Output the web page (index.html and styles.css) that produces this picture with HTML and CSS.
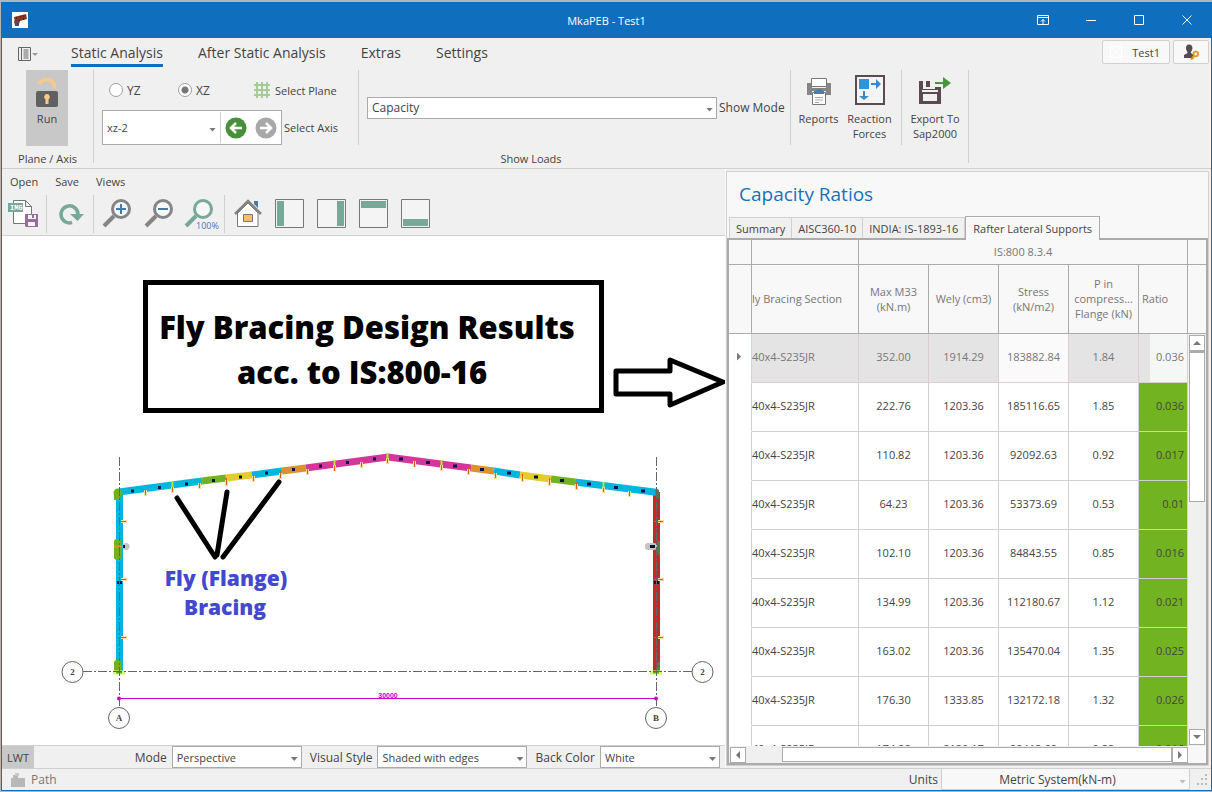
FILE: index.html
```html
<!DOCTYPE html>
<html lang="en">
<head>
<meta charset="utf-8">
<title>MkaPEB - Test1</title>
<link rel="stylesheet" href="styles.css">
</head>
<body>
<div class="window">
  <header class="titlebar">
    <svg class="app-logo" width="16" height="16" viewBox="0 0 16 16" aria-hidden="true"><rect width="16" height="16" fill="#fff"/><path d="M2 5L14 2l1 5-7 2-1 3H3z" fill="#8a3524"/><path d="M2 9l5 1v4H3z" fill="#4d5268"/><path d="M4 6h1M8 5h1M11 4h1M11 7h1M5 12h1M7 8h1" stroke="#2c1511" stroke-width="1"/></svg>
    <h1 class="window-title">MkaPEB - Test1</h1>
    <div class="window-buttons">
      <button type="button" aria-label="Ribbon display options"><svg width="16" height="16" viewBox="0 0 16 16"><path d="M2.500 3.500h11v9h-11zM2.500 5.500h11M8 12V7.500M6 9.500l2-2 2 2" class="ws"/></svg></button>
      <button type="button" aria-label="Minimize"><svg width="16" height="16" viewBox="0 0 16 16"><path d="M3 8.500h10" class="ws"/></svg></button>
      <button type="button" aria-label="Maximize"><svg width="16" height="16" viewBox="0 0 16 16"><path d="M3.500 3.500h9v9h-9z" class="ws"/></svg></button>
      <button type="button" aria-label="Close"><svg width="16" height="16" viewBox="0 0 16 16"><path d="M3.500 3.500l9 9M12.500 3.500l-9 9" class="ws"/></svg></button>
    </div>
  </header>

  <section class="ribbon">
    <div class="ribbon-head">
      <button type="button" class="app-menu" aria-label="Application menu"><svg width="20" height="14" viewBox="0 0 20 14"><path d="M.5.5h12v13H.5zM3.500 0v14M5.500 3h5M5.500 5h5M5.500 7h5M5.500 9h5M5.500 11h5" fill="none" stroke="#666"/><path d="M14 6h6l-3 3z" fill="#999"/></svg></button>
      <nav class="ribbon-tabs">
        <button type="button" class="ribbon-tab is-active">Static Analysis</button>
        <button type="button" class="ribbon-tab">After Static Analysis</button>
        <button type="button" class="ribbon-tab">Extras</button>
        <button type="button" class="ribbon-tab">Settings</button>
      </nav>
      <div class="account">
        <button type="button" class="account-button"><svg width="12" height="12" viewBox="0 0 12 12"><path d="M.5.5h11v11H.5zM2 2l8 8M10 2l-8 8" fill="none" stroke="#fff"/></svg>Test1</button>
        <button type="button" class="account-button key" aria-label="User licence"><svg width="16" height="16" viewBox="0 0 16 16"><path d="M3 4a3.200 3.500 0 0 1 6.400 0c0 2-1 3.500-1.500 4v1L11 11v3H1v-3l3.500-2V8C4 7.500 3 6 3 4z" fill="#554b50"/><circle cx="12.800" cy="10" r="2.300" fill="none" stroke="#e09a2d" stroke-width="1.800"/><path d="M11.500 11.500L8 15.500M9.500 14l1 1" stroke="#e09a2d" stroke-width="2"/></svg></button>
      </div>
    </div>
    <div class="ribbon-body">
      <div class="group run-group">
        <div class="group-content">
          <button type="button" class="run-button">
            <svg width="24" height="34" viewBox="0 0 24 34"><path d="M4 10a8 7 0 1 1 15 5" fill="none" stroke="#f8c98c" stroke-width="3.500"/><rect x="1" y="17" width="22" height="16" rx="2" fill="#606060"/><path d="M12 20a3 3 0 0 1 1.500 5.500V30h-3v-4.500A3 3 0 0 1 12 20z" fill="#f8c98c"/></svg>
            Run</button>
        </div>
        <div class="group-caption">Plane / Axis</div>
      </div>
      <div class="group loads-group">
        <div class="group-content">
          <div class="plane-block">
            <div class="plane-row">
              <label class="radio yz"><input type="radio" name="plane">YZ</label>
              <label class="radio xz"><input type="radio" name="plane" checked>XZ</label>
              <span class="plane-title"><svg width="16" height="16" viewBox="0 0 16 16"><path d="M3 0v16M8 0v16M13 0v16M0 3h16M0 8h16M0 13h16" stroke="#a5cb96" stroke-width="2"/></svg>Select Plane</span>
            </div>
            <div class="axis-row">
              <div class="axis-box">
                <span class="combo axis"><select id="axis" aria-label="Axis"><option>xz-2</option></select></span>
                <button type="button" class="round" aria-label="Previous axis"><svg width="22" height="22" viewBox="0 0 22 22"><circle cx="11" cy="11" r="10.500" fill="#478f3b"/><path d="M17 11H7M11 6l-5 5 5 5" fill="none" stroke="#fff" stroke-width="2.500"/></svg></button>
                <button type="button" class="round" aria-label="Next axis"><svg width="22" height="22" viewBox="0 0 22 22"><circle cx="11" cy="11" r="10.500" fill="#a8a8a8"/><path d="M5 11h10M11 6l5 5-5 5" fill="none" stroke="#fff" stroke-width="2.500"/></svg></button>
              </div>
              <label for="axis">Select Axis</label>
            </div>
          </div>
          <div class="mode-block">
            <span class="combo mode"><select id="showmode"><option>Capacity</option></select></span>
            <label for="showmode">Show Mode</label>
          </div>
          <div class="tool-block">
            <button type="button" class="big-button"><svg width="32" height="32" viewBox="0 0 32 32"><path d="M4 9h5v5h14V9h5v12h-5v-4H9v4H4z" fill="#858585"/><path d="M8.500 4.500h15v8h-15zM9.500 18.500h13v12h-13z" fill="#fff" stroke="#777"/><path d="M11 17h2l1-2h4l1 2h2v3H11z" fill="#4580b0"/><path d="M12 23.500h8M12 26h8M12 28.500h4" stroke="#aaa"/></svg><span>Reports</span></button>
            <button type="button" class="big-button"><svg width="32" height="32" viewBox="0 0 32 32"><rect x="2" y="2" width="28" height="28" fill="#f4f4f4" stroke="#5a4b51" stroke-width="2"/><path d="M5 5h10v10H5z" fill="#2f94d8"/><path d="M17 9h5V5l5 5-5 5v-4h-5zM9 17v5H5l5 4 5-4h-4v-5z" fill="#3b89cc"/></svg><span>Reaction<br>Forces</span></button>
          </div>
          <div class="tool-block last">
            <button type="button" class="big-button"><svg width="32" height="32" viewBox="0 0 32 32"><path d="M0 7h4v8h12v-2h6v17H0zM4 20v7h14v-7zM3 16v2h16v-2zM7 7h4v6H7z" fill="#5a4b51" fill-rule="evenodd"/><path d="M16 8h8V3l8 6-8 6v-5h-8z" fill="#4a9440"/></svg><span>Export To<br>Sap2000</span></button>
          </div>
        </div>
        <div class="group-caption">Show Loads</div>
      </div>
    </div>
  </section>

  <main class="workspace">
    <section class="model">
      <nav class="menu"><button type="button">Open</button><button type="button">Save</button><button type="button">Views</button></nav>
      <div class="toolbar">
        <button type="button" aria-label="Save image"><svg width="32" height="32" viewBox="0 0 32 32"><path d="M6.500 2.500h12l6 6v17h-18zM18.500 2.500v6h6" fill="#fff" stroke="#777"/><rect x="1" y="5" width="15" height="9" fill="#78a898"/><text x="3" y="12" class="img-text">IMG</text><path d="M18 16h13v13H19l-1-1z" fill="#966e9a"/><path d="M21 17h8v4h-8zM21 24h7v4h-7z" fill="#f4f4f4"/><path d="M25 17h2v3h-2z" fill="#966e9a"/></svg></button>
        <i class="sep"></i>
        <button type="button" aria-label="Refresh"><svg width="32" height="32" viewBox="0 0 32 32"><path d="M18 24.500A8.500 8.500 0 1 1 24 16" fill="none" stroke="#78a898" stroke-width="3.500"/><path d="M16 16h14l-6.500 7z" fill="#78a898"/></svg></button>
        <i class="sep"></i>
        <button type="button" aria-label="Zoom in"><svg width="32" height="32" viewBox="0 0 32 32"><path d="M13 18L3 28" stroke="#858585" stroke-width="4"/><circle cx="20" cy="11" r="8.500" class="lens"/><path d="M20 6v10M15 11h10" stroke="#3f7cad" stroke-width="2"/></svg></button>
        <button type="button" aria-label="Zoom out"><svg width="32" height="32" viewBox="0 0 32 32"><path d="M13 18L3 28" stroke="#858585" stroke-width="4"/><circle cx="20" cy="11" r="8.500" class="lens"/><path d="M15 11h10" stroke="#3f7cad" stroke-width="2"/></svg></button>
        <button type="button" aria-label="Zoom 100%"><svg width="32" height="32" viewBox="0 0 32 32"><path d="M11 18L1 28" stroke="#78a898" stroke-width="4"/><circle cx="18" cy="11" r="8.500" class="lens green"/><text x="11" y="31" class="percent">100%</text></svg></button>
        <i class="sep"></i>
        <button type="button" aria-label="Home view"><svg width="32" height="32" viewBox="0 0 32 32"><path d="M22 3h4v7l-4-4z" fill="#3f7cad"/><path d="M6 15L16 5l10 10v13.500H5.500V15z" fill="#fff" stroke="#777"/><path d="M3 16L16 3l13 13" fill="none" stroke="#858585" stroke-width="2.500"/><path d="M11.500 16.500h9v7h-9z" fill="#f5c06c" stroke="#777"/></svg></button>
        <button type="button" aria-label="Left view"><svg width="32" height="32" viewBox="0 0 32 32"><path d="M1.500 1.500h28v28h-28z" class="frame"/><path d="M3 3h7v25H3z" fill="#78a898"/></svg></button>
        <button type="button" aria-label="Right view"><svg width="32" height="32" viewBox="0 0 32 32"><path d="M1.500 1.500h28v28h-28z" class="frame"/><path d="M21 3h7v25h-7z" fill="#78a898"/></svg></button>
        <button type="button" aria-label="Top view"><svg width="32" height="32" viewBox="0 0 32 32"><path d="M1.500 1.500h28v28h-28z" class="frame"/><path d="M3 3h25v7H3z" fill="#78a898"/></svg></button>
        <button type="button" aria-label="Bottom view"><svg width="32" height="32" viewBox="0 0 32 32"><path d="M1.500 1.500h28v28h-28z" class="frame"/><path d="M3 21h25v7H3z" fill="#78a898"/></svg></button>
      </div>
      <div class="canvas">
        <svg class="drawing" viewBox="2 236 723 509" role="img" aria-label="Portal frame elevation on axis 2">
          <rect x="145.500" y="282.500" width="456" height="128" fill="none" stroke="#000" stroke-width="5"/>
          <text x="367" y="339" class="note">Fly Bracing Design Results</text>
          <text x="362" y="384" class="note">acc. to IS:800-16</text>
          <path d="M616 371H670V360L723 382 670 405V394H616z" fill="none" stroke="#000" stroke-width="5" stroke-linejoin="round"/>

          <g fill="none" stroke-width="7">
            <path d="M119.500 492V672" stroke="#00b6de"/>
            <path d="M656.500 492V673" stroke="#bf2a2a"/>
            <path d="M119 492L202 481" stroke="#00b6de"/><path d="M202 481L226 478" stroke="#70b221"/><path d="M226 478L252 475" stroke="#e3cc2b"/><path d="M252 475L282 471" stroke="#00b6de"/><path d="M282 471L306 468" stroke="#dd9129"/><path d="M306 468L388 457 471 468" stroke="#d3379b"/>
            <path d="M471 468L494 471" stroke="#dd9129"/><path d="M494 471L520 475" stroke="#00b6de"/><path d="M520 475L551 479" stroke="#e3cc2b"/><path d="M551 479L575 482" stroke="#70b221"/><path d="M575 482L658 492.500" stroke="#00b6de"/>
          </g>
          <g fill="none">
            <path class="glow" d="M145.500 490v6M172.500 487v6M199.500 483v6M226.500 480v6M253.500 476v6M280.500 473v6M307.500 469v6M334.500 465v6M361.500 462v6M387.500 458v6M414.500 461v6M441.500 465v6M468.500 469v6M495.500 473v6M522.500 476v6M549.500 480v6M576.500 484v6M603.500 487v6M629.500 491v6M121 521.500h6M121 579.500h6M121 637.500h6M658 521.500h6M658 579.500h6M658 637.500h6"/>
            <path class="tie" d="M145.500 489v6M172.500 485v7M199.500 481v7M226.500 478v7M253.500 474v7M280.500 471v7M307.500 467v7M334.500 464v7M361.500 460v7M387.500 456v7M414.500 460v7M441.500 463v7M468.500 467v7M495.500 471v7M522.500 474v7M549.500 478v7M576.500 482v7M603.500 486v6M629.500 490v6M117 521.500h9M117 579.500h9M117 637.500h9M654 521.500h9M654 579.500h9M654 637.500h9"/>
            <path d="M172.500 481v6M334.500 460v6M387.500 453v6M441.500 460v5M603.500 482v6" stroke="#b8e82c" stroke-width="2"/>
            <path d="M131 491h3M158 487.500h3M185 484h3M212 480.500h3M239 477h3M265 473h3M292 469.500h3M319 466h3M346 462.500h3M373 459h3M399 459h4M426 462.500h4M453 466h4M480 469.500h4M507 473h4M534 477h4M560 480.500h4M587 484h4M614 487.500h4M641 491h4M117 582.500h5M654 582.500h5" stroke="#00104a" stroke-width="3"/>
          </g>
          <g fill="#70b221"><circle cx="118" cy="493" r="4.500"/><path d="M114 493h6l-1 7h-5z"/><rect x="114" y="539" width="7" height="21" rx="3"/><rect x="114" y="660" width="7" height="13" rx="3"/></g>
          <g fill="#5b7b45"><path d="M655 490h4v9l-3-2zM657 541h3v18l-3-8zM657 662h3v10h-3z"/></g>
          <path d="M113 672.500h12M650 672.500h12" stroke="#d8ff70" stroke-width="4"/><path d="M116 672.500h6M653 672.500h6" stroke="#57b020" stroke-width="2"/>
          <path d="M114 546.500h8" stroke="#e09030" stroke-width="2"/>
          <circle cx="126" cy="546.500" r="3.500" fill="#c4c4c4"/><rect x="645" y="543" width="12" height="7" rx="3" fill="#c4c4c4"/>
          <path d="M123 546.500h2M650 546.500h5" stroke="#00104a" stroke-width="3"/>
          <path d="M119.500 457V708M656.500 457V708M83 671.500H692" class="axis-line"/>
          <g fill="#fff" stroke="#666"><circle cx="72.500" cy="672" r="10.500"/><circle cx="702.500" cy="672" r="10.500"/><circle cx="119" cy="718" r="10.500"/><circle cx="656" cy="718" r="10.500"/></g>
          <text x="72.500" y="675" class="mark">2</text><text x="702.500" y="675" class="mark">2</text><text x="119" y="721" class="mark">A</text><text x="656" y="721" class="mark">B</text>
          <path d="M119 698.500H656" stroke="#c000c8"/><circle cx="119" cy="698.500" r="2" fill="#c000c8"/><circle cx="656" cy="698.500" r="2" fill="#c000c8"/>
          <text x="388" y="698" class="dim">30000</text>
          <path d="M177 498L215 557M227 492L217 555M279 482L223 557" fill="none" stroke="#000" stroke-width="5" stroke-linecap="round"/>
          <text x="226" y="586" class="note small">Fly (Flange)</text>
          <text x="225" y="615" class="note small">Bracing</text>
        </svg>
      </div>
      <div class="view-bar">
        <button type="button" class="lwt">LWT</button>
        <label for="viewmode" class="push">Mode</label>
        <span class="combo w130"><select id="viewmode"><option>Perspective</option></select></span>
        <label for="style">Visual Style</label>
        <span class="combo w150"><select id="style"><option>Shaded with edges</option></select></span>
        <label for="back">Back Color</label>
        <span class="combo w120"><select id="back"><option>White</option></select></span>
      </div>
    </section>

    <section class="results">
      <h2>Capacity Ratios</h2>
      <nav class="tabs">
        <button type="button">Summary</button><button type="button">AISC360-10</button><button type="button">INDIA: IS-1893-16</button><button type="button" class="is-active">Rafter Lateral Supports</button>
      </nav>
      <div class="grid">
        <div class="grid-main">
          <div class="table-clip">
            <table>
              <colgroup><col class="c-mark"><col class="c-section"><col class="c-num"><col class="c-num"><col class="c-num"><col class="c-num"><col class="c-ratio"></colgroup>
              <thead>
                <tr class="band"><th></th><th></th><th colspan="5">IS:800 8.3.4</th></tr>
                <tr class="heads"><th></th><th class="section">ly Bracing Section</th><th>Max M33 (kN.m)</th><th>Wely (cm3)</th><th>Stress (kN/m2)</th><th>P in compress... Flange (kN)</th><th class="ratio">Ratio</th></tr>
              </thead>
              <tbody>
                <tr class="selected"><td><span class="pointer"></span></td><td>40x4-S235JR</td><td>352.00</td><td>1914.29</td><td class="light">183882.84</td><td>1.84</td><td>0.036</td></tr>
                <tr><td></td><td>40x4-S235JR</td><td>222.76</td><td>1203.36</td><td>185116.65</td><td>1.85</td><td>0.036</td></tr>
                <tr><td></td><td>40x4-S235JR</td><td>110.82</td><td>1203.36</td><td>92092.63</td><td>0.92</td><td>0.017</td></tr>
                <tr><td></td><td>40x4-S235JR</td><td>64.23</td><td>1203.36</td><td>53373.69</td><td>0.53</td><td>0.01</td></tr>
                <tr><td></td><td>40x4-S235JR</td><td>102.10</td><td>1203.36</td><td>84843.55</td><td>0.85</td><td>0.016</td></tr>
                <tr><td></td><td>40x4-S235JR</td><td>134.99</td><td>1203.36</td><td>112180.67</td><td>1.12</td><td>0.021</td></tr>
                <tr><td></td><td>40x4-S235JR</td><td>163.02</td><td>1203.36</td><td>135470.04</td><td>1.35</td><td>0.025</td></tr>
                <tr><td></td><td>40x4-S235JR</td><td>176.30</td><td>1333.85</td><td>132172.18</td><td>1.32</td><td>0.026</td></tr>
                <tr><td></td><td>40x4-S235JR</td><td>174.28</td><td>2130.17</td><td>92413.69</td><td>0.83</td><td>0.016</td></tr>
              </tbody>
            </table>
          </div>
          <div class="v-side">
            <div class="side-band"></div><div class="side-heads"></div>
            <div class="v-scroll"><button type="button" class="arrow up" aria-label="Scroll up"></button><div class="v-thumb"></div><button type="button" class="arrow down" aria-label="Scroll down"></button></div>
          </div>
        </div>
        <div class="h-scroll"><button type="button" class="arrow left" aria-label="Scroll left"></button><div class="h-thumb"></div><button type="button" class="arrow right" aria-label="Scroll right"></button></div>
      </div>
    </section>
  </main>

  <footer class="status">
    <svg width="14" height="14" viewBox="0 0 14 14" aria-hidden="true"><path d="M0 5h2V2h5v3h7v9H0z" fill="#b8b8b8"/><path d="M4 0h4v3H4z" fill="#c8c8c8"/></svg>
    <span class="path">Path</span>
    <label for="units" class="push">Units</label>
    <span class="combo units"><select id="units"><option>Metric System(kN-m)</option></select></span>
    <svg class="grip" width="12" height="12" viewBox="0 0 12 12" aria-hidden="true"><path d="M9 0h2v2H9zM5 4h2v2H5zM9 4h2v2H9zM1 9h2v2H1zM5 9h2v2H5zM9 9h2v2H9z" fill="#bbb"/></svg>
  </footer>
</div>
</body>
</html>
```

FILE: styles.css
```css
* { box-sizing: border-box; }
html, body { height: 100%; margin: 0; }
body {
  display: flex;
  padding: 2px 0 1px 1px;
  background: #b5b5b5;
  color: #444;
  font: 12px/15px "Open Sans", "Noto Sans", sans-serif;
}
button, select { font: inherit; color: inherit; }
button { padding: 0; border: 0; background: none; }
h1, h2 { margin: 0; font-weight: 400; }
svg { display: block; flex: none; }

.window {
  flex: 1;
  min-width: 0;
  display: flex;
  flex-direction: column;
  border: 1px solid #106ebe;
  border-top: 0;
  background: #f0f0f0;
}

/* Title bar */
.titlebar {
  display: grid;
  grid-template-columns: 1fr auto 1fr;
  align-items: center;
  height: 36px;
  padding-left: 10px;
  background: #106ebe;
  color: #fff;
}
.window-title { font-size: 11px; margin-right: 10px; }
.window-buttons { display: flex; justify-content: flex-end; }
.window-buttons button { display: flex; justify-content: center; width: 48px; padding: 10px 0; }
.ws { fill: none; stroke: #fff; }

/* Ribbon */
.ribbon { border-bottom: 1px solid #d0d0d0; }
.ribbon-head { display: flex; height: 32px; }
.app-menu { display: flex; align-items: center; width: 69px; padding-left: 16px; }
.ribbon-tabs { display: flex; gap: 35px; align-items: flex-start; }
.ribbon-tab { height: 29px; padding-top: 3px; border-bottom: 3px solid transparent; font-size: 14px; line-height: 22px; white-space: nowrap; }
.ribbon-tab.is-active { border-color: #106ebe; }
.account { display: flex; gap: 3px; margin-left: auto; padding: 2px 2px 6px 0; }
.account-button { display: flex; align-items: center; justify-content: flex-end; gap: 10px; width: 68px; padding: 0 9px; border: 1px solid #d0d0d0; border-radius: 2px; background: #f8f8f8; font-size: 11px; }
.account-button.key { width: 36px; }
.ribbon-body { display: flex; height: 98px; }
.group { display: flex; flex-direction: column; margin-bottom: 5px; border-right: 1px solid #d0d0d0; }
.group-content { display: flex; flex: none; height: 76px; }
.group-caption { flex: none; height: 17px; padding-top: 5px; font-size: 11px; text-align: center; line-height: 16px; white-space: nowrap; }
.run-group { width: 92px; }
.run-button { display: flex; flex-direction: column; align-items: center; gap: 3px; width: 42px; margin-left: 24px; padding-top: 4px; background: #c8c8c8; font-size: 11px; }
.loads-group { width: 875px; }
.plane-block { display: flex; flex-direction: column; width: 265px; padding: 10px 0 0 8px; border-right: 1px solid #d0d0d0; }
.loads-group .plane-block, .mode-block, .tool-block { margin-bottom: 1px; }
.plane-row { display: flex; align-items: center; height: 20px; padding-left: 7px; }
.radio { display: flex; align-items: center; gap: 4px; width: 69px; }
.radio input { appearance: none; width: 14px; height: 14px; margin: 0; border: 1px solid #a0a0a0; border-radius: 50%; background: #fff; }
.radio input:checked { background: radial-gradient(#777 0 3px, #fff 4px); }
.xz { width: 76px; }
.plane-title { display: flex; align-items: center; gap: 5px; font-size: 11px; white-space: nowrap; }
.axis-row { display: flex; align-items: center; gap: 2px; margin-top: 10px; font-size: 11px; }
.axis-box { display: flex; width: 180px; height: 35px; border: 1px solid #ababab; background: #fff; }
.round { display: flex; align-items: center; padding: 0 4px; }
.mode-block { display: flex; align-items: center; gap: 2px; width: 432px; padding-left: 8px; border-right: 1px solid #d0d0d0; font-size: 12px; white-space: nowrap; }
.tool-block { display: flex; width: 111px; padding: 0 6px 0 2px; border-right: 1px solid #d0d0d0; }
.tool-block.last { border: 0; width: 66px; padding: 0; }
.big-button { display: flex; flex: 1; flex-direction: column; align-items: center; gap: 5px; padding-top: 4px; font-size: 11px; white-space: nowrap; }

/* Drop-down lists */
.combo { position: relative; display: flex; }
.combo select { width: 100%; height: 22px; padding: 0 4px; appearance: none; border: 1px solid #ababab; border-radius: 0; background: #fff; font-size: 11px; }
.combo::after { content: ""; position: absolute; top: 50%; right: 4px; width: 7px; height: 4px; background: #777; clip-path: polygon(0 0, 100% 0, 50% 100%); pointer-events: none; }
.combo.axis { width: 119px; margin: 1px 0; border-right: 1px solid #d0d0d0; }
.combo.axis select { height: 100%; border: 0; }
.combo.mode { width: 350px; }
.combo.mode select { font-size: 12px; }
.w130 { width: 130px; }
.w150 { width: 150px; }
.w120 { width: 120px; }
.combo.units { width: 249px; }
.combo.units select { height: 21px; border-color: #d0d0d0; border-top: 0; background: #f8f8f8; font-size: 12px; text-align: center; text-align-last: center; padding-right: 20px; }
.combo.units::after { background: #bbb; }

/* Model area */
.workspace { display: grid; grid-template-columns: minmax(0, 1fr) 485px; flex: 1; min-height: 0; }
.model { display: flex; flex-direction: column; min-width: 0; min-height: 0; border-right: 1px solid #f8f8f8; }
.menu { display: flex; gap: 17px; height: 24px; padding-left: 8px; font-size: 11px; }
.toolbar { display: flex; align-items: center; height: 43px; border-bottom: 1px solid #d0d0d0; }
.toolbar button { display: flex; justify-content: center; width: 42px; }
.sep { width: 1px; height: 38px; margin: 0 2px; background: #d0d0d0; }
.lens { fill: #f7f7f7; stroke: #858585; stroke-width: 3; }
.lens.green { stroke: #78a898; }
.frame { fill: #f4f4f4; stroke: #777; }
.img-text { font: 700 7px "Liberation Mono", monospace; fill: #fff; }
.percent { font: 9px "Open Sans", sans-serif; fill: #3f7cad; }
.toolbar svg { overflow: visible; }
.canvas { flex: 1; min-height: 0; background: #fff; }
.drawing { width: 100%; height: 100%; }
.note { font: 800 31px "Open Sans", sans-serif; text-anchor: middle; fill: #000; }
.note.small { font-size: 21px; fill: #4348cf; }
.glow { stroke: #ffdc9c; stroke-width: 3; }
.tie { stroke: #d96018; stroke-width: 1; }
.axis-line { fill: none; stroke: #666; stroke-dasharray: 9 2 2 2; }
.mark { font: 700 9px "Liberation Serif", serif; text-anchor: middle; fill: #444; }
.dim { font: 700 7px "Liberation Sans", sans-serif; text-anchor: middle; fill: #c000c8; }
.view-bar { display: flex; align-items: center; gap: 5px; height: 23px; padding-right: 5px; border-top: 1px solid #d0d0d0; white-space: nowrap; }
.view-bar .combo + label { margin-left: 3px; }
.lwt { align-self: stretch; width: 32px; background: #c8c8c8; font-size: 11px; }
.push { margin-left: auto; }

/* Results panel */
.results { display: flex; flex-direction: column; min-height: 0; margin: 2px 2px 2px 0; border: 1px solid #d0d0d0; background: #f8f8f8; font-size: 11px; }
.results h2 { height: 43px; padding: 10px 12px 0; color: #1a70bb; font-size: 19px; line-height: 25px; }
.tabs { display: flex; align-items: flex-end; height: 23px; padding-left: 2px; white-space: nowrap; }
.tabs button { height: 21px; padding: 0 6px; border: 1px solid #d0d0d0; border-bottom: 0; background: #f0f0f0; }
.tabs button + button { border-left: 0; }
.tabs .is-active { z-index: 1; height: 24px; margin-bottom: -2px; padding: 0 7px; border: 1px solid #ababab; border-bottom: 0; background: #f8f8f8; }
.tabs .is-active.is-active { border-left: 1px solid #ababab; }
.grid { display: flex; flex-direction: column; flex: 1; min-height: 0; border: 2px solid #ababab; }
.grid-main { display: flex; flex: 1; min-height: 0; }
.table-clip { flex: 1; min-width: 0; overflow: hidden; background: #fff; }
table { width: 100%; table-layout: fixed; border-collapse: separate; border-spacing: 0; }
.c-mark { width: 23px; }
.c-section { width: 107px; }
.c-num { width: 70px; }
th { padding: 0 3px 1px; border: solid #ababab; border-width: 0 1px 1px 0; background: #f8f8f8; color: #777; font-weight: 400; }
.band { height: 25px; }
.heads { height: 69px; }
th.section, th.ratio { text-align: left; white-space: nowrap; }
th.section { padding-left: 0; }
td { height: 49px; padding: 0 0 3px; border: solid #d0d0d0; border-width: 0 1px 1px 0; text-align: center; }
td:first-child { border-bottom-color: #fff; }
td:nth-child(2) { text-align: left; }
td:last-child { padding-right: 3px; background: #72b321; text-align: right; }
.selected td { border-color: #dccfd2; background: #e4e4e4; color: #777; }
.selected td:first-child { border-bottom-color: #fff; background: #fff; }
.selected td.light { background: #fafafa; }
.selected td:last-child { background: linear-gradient(90deg, #e4e4e4 11px, #f5f7f6 11px); }
.pointer { display: block; width: 4px; height: 8px; margin-left: 8px; background: #777; clip-path: polygon(0 0, 100% 50%, 0 100%); }
.v-side { display: flex; flex-direction: column; width: 18px; }
.side-band { height: 25px; border-bottom: 1px solid #ababab; }
.side-heads { height: 69px; border-bottom: 1px solid #ababab; }
.v-scroll { display: flex; flex-direction: column; flex: 1; min-height: 0; padding: 1px; background: #f0f0f0; }
.v-thumb { height: 151px; margin-bottom: auto; border: 1px solid #ababab; border-top-width: 2px; background: #fff; }
.arrow { display: flex; flex: none; align-items: center; justify-content: center; width: 16px; height: 16px; border: 1px solid #ababab; background: #fff; }
.arrow::before { content: ""; width: 8px; height: 4px; background: #777; }
.up::before { clip-path: polygon(0 100%, 50% 0, 100% 100%); }
.down::before { clip-path: polygon(0 0, 100% 0, 50% 100%); }
.left::before { width: 4px; height: 8px; clip-path: polygon(100% 0, 100% 100%, 0 50%); }
.right::before { width: 4px; height: 8px; clip-path: polygon(0 0, 100% 50%, 0 100%); }
.h-scroll { display: flex; height: 17px; margin-right: 18px; padding: 1px 0 1px 1px; background: #f0f0f0; }
.h-thumb { flex: 1; margin-left: 36px; border: 1px solid #ababab; background: #fff; }

/* Status bar */
.status { display: flex; align-items: center; height: 22px; padding: 0 3px 0 9px; border-top: 1px solid #d0d0d0; }
.path { margin-left: 6px; color: #777; }
.status .combo { margin-left: 3px; }
.grip { margin-left: 6px; }
```
